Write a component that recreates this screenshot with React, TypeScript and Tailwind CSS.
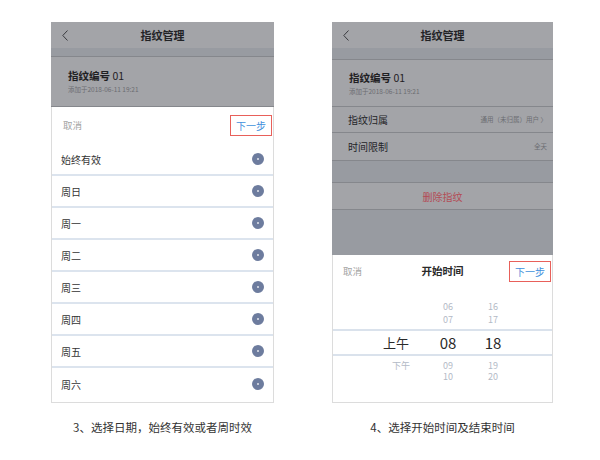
import React from "react";

const font = { fontFamily: '"Noto Sans CJK SC", "Noto Sans", sans-serif' };

const days = ["始终有效", "周日", "周一", "周二", "周三", "周四", "周五", "周六"];

function Back() {
  return (
    <svg width="6" height="11" viewBox="0 0 6 11" className="shrink-0">
      <path d="M5.5 0.5 L0.8 5.5 L5.5 10.5" fill="none" stroke="#3a3b3f" strokeWidth="1" />
    </svg>
  );
}

function Header() {
  return (
    <div className="relative h-[26px] bg-[#a3a4a8] flex items-center pl-[11px]">
      <Back />
      <div className="absolute inset-0 flex items-center justify-center text-[11px] font-semibold text-[#222326]">
        指纹管理
      </div>
    </div>
  );
}

function Card({ top }: { top: number }) {
  return (
    <div
      className="bg-[#a3a4a8] border-b border-[#85878c] flex flex-col justify-center pl-[17px]"
      style={{ height: top }}
    >
      <div className="text-[10.5px] font-semibold text-[#1f2023] leading-[14px]">
        指纹编号 <span className="font-normal">01</span>
      </div>
      <div className="text-[6.5px] text-[#6c6d72] leading-[10px] mt-[1px]">添加于2018-06-11 19:21</div>
    </div>
  );
}

function NextBtn() {
  return (
    <div className="w-[42px] h-[21px] border border-[#e8605a] flex items-center justify-center text-[10px] text-[#3f8fdc]">
      下一步
    </div>
  );
}

function LeftPhone() {
  return (
    <div className="w-[223px] flex flex-col">
      <Header />
      <div className="h-[9px] bg-[#989ba1] border-b border-[#85878c]" />
      <Card top={50} />
      <div className="h-[296px] bg-white border-x border-b border-[#dcdcdc] flex flex-col">
        <div className="h-[37px] flex items-center justify-between pl-[11px] pr-[1px]">
          <span className="text-[9.5px] text-[#a3a3a3]">取消</span>
          <NextBtn />
        </div>
        {days.map((d, i) => (
          <div
            key={d}
            className={`h-[32px] flex items-center justify-between pl-[9px] pr-[9px] ${
              i < days.length - 1 ? "border-b-2 border-[#dce4ee]" : ""
            }`}
          >
            <span className="text-[10px] text-[#333]">{d}</span>
            <span className="w-[12px] h-[12px] rounded-full bg-[#6d7c9e] flex items-center justify-center">
              <span className="w-[2px] h-[2px] rounded-full bg-white/80" />
            </span>
          </div>
        ))}
      </div>
    </div>
  );
}

function Row({ h, label, value }: { h: number; label: string; value: string }) {
  return (
    <div
      className="bg-[#a3a4a8] border-b border-[#85878c] flex items-center justify-between pl-[16px] pr-[6px]"
      style={{ height: h }}
    >
      <span className="text-[10px] text-[#242528]">{label}</span>
      <span className="text-[6.5px] text-[#6c6d72]">{value}</span>
    </div>
  );
}

function PickRow({ a, b, c, cls, aCls }: { a: string; b: string; c: string; cls: string; aCls?: string }) {
  return (
    <div className={`flex items-center pl-[38px] ${cls}`}>
      <span className={`w-[50px] text-center ${aCls ?? ""}`}>{a}</span>
      <span className="w-[54px] text-center">{b}</span>
      <span className="w-[36px] text-center">{c}</span>
    </div>
  );
}

function RightPhone() {
  return (
    <div className="w-[221px] flex flex-col">
      <Header />
      <div className="h-[12px] bg-[#989ba1] border-b border-[#85878c]" />
      <Card top={47} />
      <Row h={26} label="指纹归属" value="通用（未归属）用户 〉" />
      <Row h={28} label="时间限制" value="全天" />
      <div className="h-[22px] bg-[#989ba1] border-b border-[#85878c]" />
      <div className="h-[27px] bg-[#a3a4a8] border-b border-[#85878c] flex items-center justify-center text-[10px] text-[#b34c55]">
        删除指纹
      </div>
      <div className="h-[45px] bg-[#989ba1]" />
      <div className="h-[148px] bg-white border-x border-b border-[#dcdcdc] flex flex-col">
        <div className="relative h-[32px] flex items-center justify-between pl-[10px] pr-[1px]">
          <span className="text-[9.5px] text-[#a3a3a3]">取消</span>
          <span className="absolute inset-0 flex items-center justify-center text-[10.5px] font-semibold text-[#2a2a2a] pointer-events-none">
            开始时间
          </span>
          <NextBtn />
        </div>
        <div className="h-[13px]" />
        <PickRow a="" b="06" c="16" cls="h-[13px] text-[9px] text-[#b3bac6] leading-none" />
        <PickRow a="" b="07" c="17" cls="h-[13px] text-[9px] text-[#b3bac6] leading-none" />
        <div className="h-[3px]" />
        <PickRow
          a="上午"
          b="08"
          c="18"
          cls="h-[27px] border-y-2 border-[#dae2ec] text-[15px] text-[#2a2a2a] leading-none"
          aCls="text-[13px]"
        />
        <PickRow
          a="下午"
          b="09"
          c="19"
          cls="h-[12px] mt-[3px] text-[9px] text-[#b3bac6] leading-none"
          aCls="pl-[10px]"
        />
        <PickRow a="" b="10" c="20" cls="h-[11px] text-[9px] text-[#b3bac6] leading-none" />
      </div>
    </div>
  );
}

export default function App() {
  return (
    <div className="w-[600px] h-[460px] bg-white pt-[22px]" style={font}>
      <div className="flex pl-[51px] gap-[58px]">
        <div className="flex flex-col items-center">
          <LeftPhone />
          <div className="mt-[16px] text-[11.5px] text-[#333] leading-[16px]">3、选择日期，始终有效或者周时效</div>
        </div>
        <div className="flex flex-col items-center">
          <RightPhone />
          <div className="mt-[16px] text-[11.5px] text-[#333] leading-[16px]">4、选择开始时间及结束时间</div>
        </div>
      </div>
    </div>
  );
}
